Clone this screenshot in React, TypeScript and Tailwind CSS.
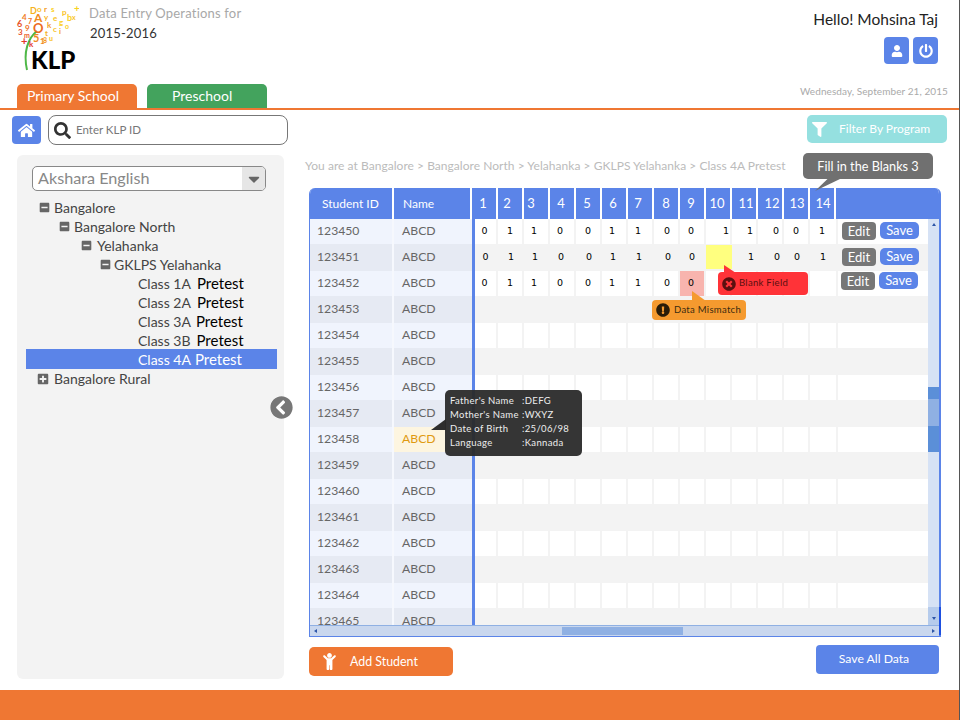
import React from 'react';
import {
  FaCaretDown,
  FaChevronCircleLeft,
  FaChild,
  FaExclamationCircle,
  FaFilter,
  FaHome,
  FaMinusSquare,
  FaPlusSquare,
  FaPowerOff,
  FaSearch,
  FaTimesCircle,
  FaUser,
} from 'react-icons/fa';

const LOGO_GLYPHS: [string, number, number, string, number][] = [
  ['D', 29, 14, '#f6b21c', 9], ['o', 36, 12, '#f9c21e', 8], ['r', 43, 12, '#f39a1d', 8], ['s', 50, 12, '#fbd026', 8],
  ['A', 33, 22, '#f08a1e', 12], ['+', 73, 12, '#f7d21f', 10], ['p', 61, 15, '#f9c21e', 8], ['b', 66, 21, '#fbd026', 9],
  ['y', 43, 20, '#f6b21c', 8], ['4', 21, 20, '#ef7b22', 8], ['7', 27, 24, '#ee6f24', 7], ['e', 52, 21, '#f9c21e', 8],
  ['6', 16, 27, '#e8532a', 9], ['9', 24, 31, '#ee6f24', 8], ['O', 32, 33, '#ec6a22', 13], ['k', 46, 28, '#f39a1d', 8],
  ['g', 58, 25, '#fbd026', 8], ['x', 71, 20, '#f7c51f', 7], ['3', 17, 35, '#e8532a', 8], ['m', 23, 38, '#ec5f25', 7],
  ['5', 32, 42, '#f08a1e', 11], ['t', 44, 36, '#f6b21c', 8], ['c', 52, 32, '#f9c21e', 8], ['+', 20, 45, '#e2382a', 11],
  ['k', 28, 47, '#e2382a', 8], ['1', 39, 44, '#f08a1e', 8], ['u', 48, 41, '#f9c21e', 7], ['o', 64, 29, '#fbd026', 7],
  ['i', 58, 34, '#f6b21c', 8], ['8', 42, 43, '#f39a1d', 7],
];

// nudges taken per column, the source table was not centered consistently
const VALUE_SHIFT = ['pr-[2px]', '', 'pr-[4px]', 'pr-[4px]', '', 'pr-[4px]', 'pr-[4px]', 'pl-[2px]', 'pr-[2px]', 'pl-[16px]', 'pl-[12px]', 'pl-[12px]', '', 'pr-[2px]'];
const HEAD_SHIFT = ['pr-[2px]', 'pr-[6px]', 'pr-[10px]', 'pr-[2px]', 'pr-[2px]', 'pr-[2px]', 'pr-[4px]', '', 'pr-[2px]', 'pr-[2px]', 'pl-[4px]', 'pl-[4px]', 'pl-[2px]', 'pl-[2px]'];

const ROW_VALUES: string[][] = [
  ['0', '1', '1', '0', '0', '1', '1', '0', '0', '1', '1', '0', '0', '1'],
  ['0', '1', '1', '0', '0', '1', '1', '0', '0', '', '1', '0', '0', '1'],
  ['0', '1', '1', '0', '0', '1', '1', '0', '0', '', '', '', '', ''],
];

const STUDENT_IDS = Array.from({ length: 16 }, (_, i) => String(123450 + i));
const COLS = Array.from({ length: 14 }, (_, i) => i + 1);

const TREE_NODES = [
  { label: 'Bangalore', iconPad: 'pl-[13px]', gap: 'gap-[4px]' },
  { label: 'Bangalore North', iconPad: 'pl-[33px]', gap: 'gap-[4px]' },
  { label: 'Yelahanka', iconPad: 'pl-[55px]', gap: 'gap-[5px]' },
  { label: 'GKLPS Yelahanka', iconPad: 'pl-[74px]', gap: 'gap-[3px]' },
];

const CLASSES = [
  { name: 'Class 1A', pad: 'ml-[6px]' },
  { name: 'Class 2A', pad: 'ml-[6px]' },
  { name: 'Class 3A', pad: 'ml-[5px]' },
  { name: 'Class 3B', pad: 'ml-[6px]' },
];

const Logo = () => (
  <svg width="66" height="70" viewBox="12 4 66 70" className="shrink-0">
    <path d="M36 31C27 38 22 52 26 70" fill="none" stroke="#4fb848" strokeWidth="2" />
    {LOGO_GLYPHS.map(([g, x, y, c, s], i) => (
      <text key={i} x={x} y={y} fill={c} fontSize={s} fontWeight="700" fontFamily="Lato, sans-serif">
        {g}
      </text>
    ))}
    <text x="30" y="69" fill="#000" fontSize="24" fontWeight="900" fontFamily="Lato, sans-serif">
      KLP
    </text>
  </svg>
);

const Header = () => (
  <header className="flex justify-between h-[110px] border-b-2 border-[#ef7733] shrink-0">
    <div className="flex flex-col">
      <div className="flex h-[84px] pl-[13px] pt-[4px] gap-[10px]">
        <Logo />
        <div className="text-[13px] leading-[20px] tracking-[0.2px]">
          <div className="text-[#a8a8a8] -mt-[1px]">Data Entry Operations for</div>
          <div className="text-[#333] ml-[1px]">2015-2016</div>
        </div>
      </div>
      <div className="flex pl-[17px] gap-[10px]">
        <div className="w-[120px] h-[24px] rounded-t-[5px] bg-[#ef7733] text-white text-[14px] leading-[24px] pl-[10px]">
          Primary School
        </div>
        <div className="w-[120px] h-[24px] rounded-t-[5px] bg-[#43a35d] text-white text-[14px] leading-[24px] pl-[25px]">
          Preschool
        </div>
      </div>
    </div>
    <div className="flex flex-col items-end pr-[12px]">
      <div className="pt-[9px] pr-[10px] text-[15.5px] leading-[20px] text-[#222]">Hello! Mohsina Taj</div>
      <div className="flex gap-[4px] mt-[8px] pr-[10px]">
        <div className="w-[25px] h-[27px] rounded-[4px] bg-[#5b84e8] flex items-center justify-center text-white">
          <FaUser size={12} />
        </div>
        <div className="w-[25px] h-[27px] rounded-[4px] bg-[#5b84e8] flex items-center justify-center text-white">
          <FaPowerOff size={14} />
        </div>
      </div>
      <div className="mt-[20px] text-[10px] leading-[14px] tracking-[0.08px] text-[#aaa]">Wednesday, September 21, 2015</div>
    </div>
  </header>
);

const TreeRow = ({ children, className = '' }: { children: React.ReactNode; className?: string }) => (
  <div className={`flex items-center h-[19px] text-[14px] text-[#444] ${className}`}>{children}</div>
);

const Sidebar = () => (
  <aside className="w-[300px] shrink-0 pt-[5px]">
    <div className="flex items-center pl-[12px] gap-[7px]">
      <div className="w-[29px] h-[28px] rounded-[4px] bg-[#5b84e8] flex items-center justify-center text-white">
        <FaHome size={17} />
      </div>
      <div className="w-[240px] h-[30px] rounded-[8px] border border-[#777] flex items-center pl-[5px] gap-[5px] bg-white">
        <FaSearch size={17} className="text-[#333]" />
        <span className="text-[11.5px] text-[#777]">Enter KLP ID</span>
      </div>
    </div>
    <div className="ml-[17px] mt-[10px] w-[267px] h-[524px] rounded-[6px] bg-[#f3f3f3] pt-[11px] pl-[9px] pr-[7px]">
      <div className="ml-[6px] w-[234px] h-[25px] rounded-[5px] border border-[#888] bg-white flex items-center justify-between overflow-hidden">
        <span className="pl-[5px] pb-[2px] text-[16.2px] leading-[22px] text-[#888]">Akshara English</span>
        <span className="w-[23px] h-full bg-[#e6e6e6] flex items-center justify-center text-[#666]">
          <FaCaretDown size={18} />
        </span>
      </div>
      <div className="mt-[7px]">
        {TREE_NODES.map((node) => (
          <TreeRow key={node.label} className={`${node.iconPad} ${node.gap}`}>
            <FaMinusSquare size={11} className="text-[#666] shrink-0" />
            <span>{node.label}</span>
          </TreeRow>
        ))}
        {CLASSES.map((c) => (
          <TreeRow key={c.name} className="pl-[112px]">
            <span>{c.name}</span>
            <span className={`${c.pad} text-black text-[15px]`}>Pretest</span>
          </TreeRow>
        ))}
        <TreeRow className="pl-[112px] bg-[#5b84e8] text-white !h-[20px] -mt-[1px]">
          <span>Class 4A</span>
          <span className="ml-[4px] text-[15px]">Pretest</span>
        </TreeRow>
        <TreeRow className="pl-[11px] gap-[5px]">
          <FaPlusSquare size={12} className="text-[#666] shrink-0" />
          <span>Bangalore Rural</span>
        </TreeRow>
      </div>
    </div>
  </aside>
);

const ActionButtons = ({ index }: { index: number }) => {
  const offset = index === 0 ? 'pt-[3px] pl-[4px]' : index === 1 ? 'pt-[4px] pl-[4px]' : 'pt-[1px] pl-[3px]';
  return (
    <div className={`flex gap-[4px] items-start ${offset}`}>
      <span className="w-[34px] h-[18px] rounded-[4px] bg-[#777] text-white text-[13px] leading-[18px] text-center">Edit</span>
      <span className="w-[39px] h-[17px] rounded-[5px] bg-[#5b84e8] text-white text-[13px] leading-[17px] text-center">Save</span>
    </div>
  );
};

const TableRow = ({ id, index }: { id: string; index: number }) => {
  const odd = index % 2 === 1;
  const highlighted = id === '123458';
  const values = ROW_VALUES[index];
  return (
    <div className={`flex ${odd ? 'h-[27px]' : 'h-[25px]'} bg-[#f3f3f3]`}>
      <div className={`w-[84px] ${odd ? 'bg-[#e6eaf3]' : 'bg-[#f0f4fd]'} border-r-2 border-[#f6f8fd] pl-[7px] flex items-center text-[12.2px] text-[#666]`}>
        {id}
      </div>
      <div
        className={`w-[78px] pl-[8px] flex items-center text-[12.2px] ${
          highlighted ? 'bg-[#fdf5e0] text-[#e09a10]' : odd ? 'bg-[#e6eaf3] text-[#666]' : 'bg-[#f0f4fd] text-[#666]'
        }`}
      >
        ABCD
      </div>
      <div className="w-[3px] bg-[#5b84e8]" />
      {COLS.map((col) => {
        const wide = col === 1;
        const value = values?.[col - 1] ?? '';
        const yellow = index === 1 && col === 10;
        const pink = index === 2 && col === 9;
        const bg = yellow ? 'bg-[#ffff7f] mb-[2px] mt-[1px]' : pink ? 'bg-[#f8b4ae]' : odd ? '' : 'bg-white';
        return (
          <div
            key={col}
            className={`${wide ? 'w-[23px]' : 'w-[26px]'} ${col === 14 || yellow ? '' : 'border-r-2 border-[#f3f3f3]'} ${bg} flex items-center justify-center font-['DejaVu_Sans'] text-[9.5px] text-black ${VALUE_SHIFT[col - 1]}`}
          >
            <span className={index === 1 ? 'translate-x-px' : ''}>{value}</span>
          </div>
        );
      })}
      <div className={`flex-1 border-l-2 border-[#f3f3f3] ${odd ? '' : 'bg-white'}`}>
        {index < 3 && <ActionButtons index={index} />}
      </div>
    </div>
  );
};

const DataTable = () => (
  <div className="ml-[9px] w-[632px] h-[449px] rounded-t-[6px] border-l border-b border-[#5b84e8] border-r-2 flex flex-col overflow-hidden bg-white">
    <div className="flex h-[31px] shrink-0 bg-[#5b84e8] text-white text-[12px]">
      <div className="w-[84px] pl-[12px] flex items-center border-r-2 border-white">Student ID</div>
      <div className="w-[78px] pl-[9px] flex items-center border-r-2 border-white">Name</div>
      {COLS.map((col) => (
        <div key={col} className={`w-[26px] flex items-center justify-center text-[13px] border-r-2 border-white ${HEAD_SHIFT[col - 1]}`}>
          {col}
        </div>
      ))}
    </div>
    <div className="flex flex-1 min-h-0">
      <div className="flex-1 min-w-0 overflow-hidden">
        {STUDENT_IDS.map((id, i) => (
          <TableRow key={id} id={id} index={i} />
        ))}
      </div>
      <div className="w-[11px] shrink-0 bg-[#d6e2f5] flex flex-col">
        <div className="h-[18px] flex justify-center pt-[4px]">
          <span className="w-0 h-0 border-x-[2.5px] border-x-transparent border-b-[3px] border-b-[#2c55a8]" />
        </div>
        <div className="mt-[150px] h-[65px] bg-[#5b8fd8] flex flex-col">
          <div className="mt-[12px] h-[27px] bg-[#8fb0e3]" />
        </div>
        <div className="mt-auto h-[18px] bg-[#b5cbec] flex justify-center items-end pb-[5px]">
          <span className="w-0 h-0 border-x-[2.5px] border-x-transparent border-t-[3px] border-t-[#2c55a8]" />
        </div>
      </div>
    </div>
    <div className="h-[11px] shrink-0 bg-[#c9d7ee] border-t border-[#8fb0e3] flex items-center relative">
      <span className="ml-[4px] w-0 h-0 border-y-[2.5px] border-y-transparent border-r-[3px] border-r-[#2c55a8]" />
      <div className="ml-[245px] w-[121px] h-[8px] bg-[#8fb0e3]" />
      <span className="ml-auto mr-[4px] w-0 h-0 border-y-[2.5px] border-y-transparent border-l-[3px] border-l-[#2c55a8]" />
    </div>
  </div>
);

const Content = () => (
  <section className="flex-1 min-w-0 pt-[5px]">
    <div className="flex justify-end pr-[13px]">
      <div className="w-[140px] h-[28px] rounded-[5px] bg-[#95e0e0] flex items-center text-white text-[12px] pl-[5px]">
        <FaFilter size={15} />
        <span className="ml-[12px]">Filter By Program</span>
      </div>
    </div>
    <div className="mt-[15px] pl-[5px] text-[12px] leading-[16px] tracking-[0.04px] text-[#bbb]">
      You are at Bangalore &gt; Bangalore North &gt; Yelahanka &gt; GKLPS Yelahanka &gt; Class 4A Pretest
    </div>
    <div className="mt-[14px]">
      <DataTable />
    </div>
    <div className="flex justify-between items-start mt-[8px] pl-[9px] pr-[21px]">
      <div className="mt-[2px] w-[144px] h-[29px] rounded-[5px] bg-[#ef7733] text-white text-[12.4px] flex items-center pl-[12px]">
        <FaChild size={17} />
        <span className="ml-[12px] pt-[1px]">Add Student</span>
      </div>
      <div className="w-[123px] h-[29px] rounded-[4px] bg-[#5b84e8] text-white text-[12.2px] flex items-center justify-center pr-[7px]">
        Save All Data
      </div>
    </div>
  </section>
);

const Overlays = () => (
  <>
    <div className="absolute left-[270px] top-[396px] text-[#777] bg-white rounded-full">
      <FaChevronCircleLeft size={23} />
    </div>

    {/* window edge and scrollbar corner strip */}
    <div className="absolute right-0 top-0 w-px h-full bg-[#555]" />
    <div className="absolute left-[939px] top-[607px] w-[2px] h-[28px] bg-[#1d4fe0]" />

    {/* Fill in the blanks */}
    <div className="absolute left-[803px] top-[153px] w-[130px] h-[26px] rounded-[5px] bg-[#707070] text-white text-[12.7px] leading-[26px] text-center">
      Fill in the Blanks 3
    </div>
    <div className="absolute left-[815px] top-[179px] w-[25px] h-[12px] bg-[#707070] [clip-path:polygon(0_100%,50%_0,100%_0)]" />

    {/* Blank field */}
    <div className="absolute left-[724px] top-[265px] w-[12px] h-[8px] bg-[#ff3338] [clip-path:polygon(0_0,100%_100%,0_100%)]" />
    <div className="absolute left-[718px] top-[272px] w-[90px] h-[23px] rounded-[4px] bg-[#ff3338] flex items-center pl-[4px] gap-[3px] text-[9.5px] tracking-[0.3px] text-[#5a1010]">
      <FaTimesCircle size={14} className="text-[#5a1010]" />
      <span>Blank Field</span>
    </div>

    {/* Data mismatch */}
    <div className="absolute left-[692px] top-[291px] w-[14px] h-[10px] bg-[#f59a2f] [clip-path:polygon(0_0,100%_100%,0_100%)]" />
    <div className="absolute left-[652px] top-[300px] w-[94px] h-[20px] rounded-[4px] bg-[#f59a2f] flex items-center pl-[4px] gap-[4px] text-[9.5px] tracking-[0.3px] text-[#3a2a10]">
      <FaExclamationCircle size={14} className="text-[#2a1c08]" />
      <span>Data Mismatch</span>
    </div>

    {/* Student details */}
    <div className="absolute left-[431px] top-[419px] w-[15px] h-[11px] bg-[#2e2e2e] [clip-path:polygon(100%_0,100%_100%,0_100%)]" />
    <div className="absolute left-[445px] top-[390px] w-[137px] h-[66px] rounded-[5px] bg-[#2a2a2a]/95 pl-[5px] pt-[4px] text-[9.5px] leading-[14px] tracking-[0.35px] text-[#eee]">
      {[
        ["Father's Name", ':DEFG'],
        ["Mother's Name", ':WXYZ'],
        ['Date of Birth', ':25/06/98'],
        ['Language', ':Kannada'],
      ].map(([label, value]) => (
        <div key={label} className="flex">
          <span className="w-[72px] whitespace-nowrap">{label}</span>
          <span>{value}</span>
        </div>
      ))}
    </div>
  </>
);

export default function App() {
  return (
    <div className="relative w-[960px] h-[720px] overflow-hidden bg-white flex flex-col font-['Lato',sans-serif]">
      <Header />
      <main className="flex flex-1 min-h-0">
        <Sidebar />
        <Content />
      </main>
      <footer className="h-[30px] shrink-0 bg-[#ef7733]" />
      <Overlays />
    </div>
  );
}
